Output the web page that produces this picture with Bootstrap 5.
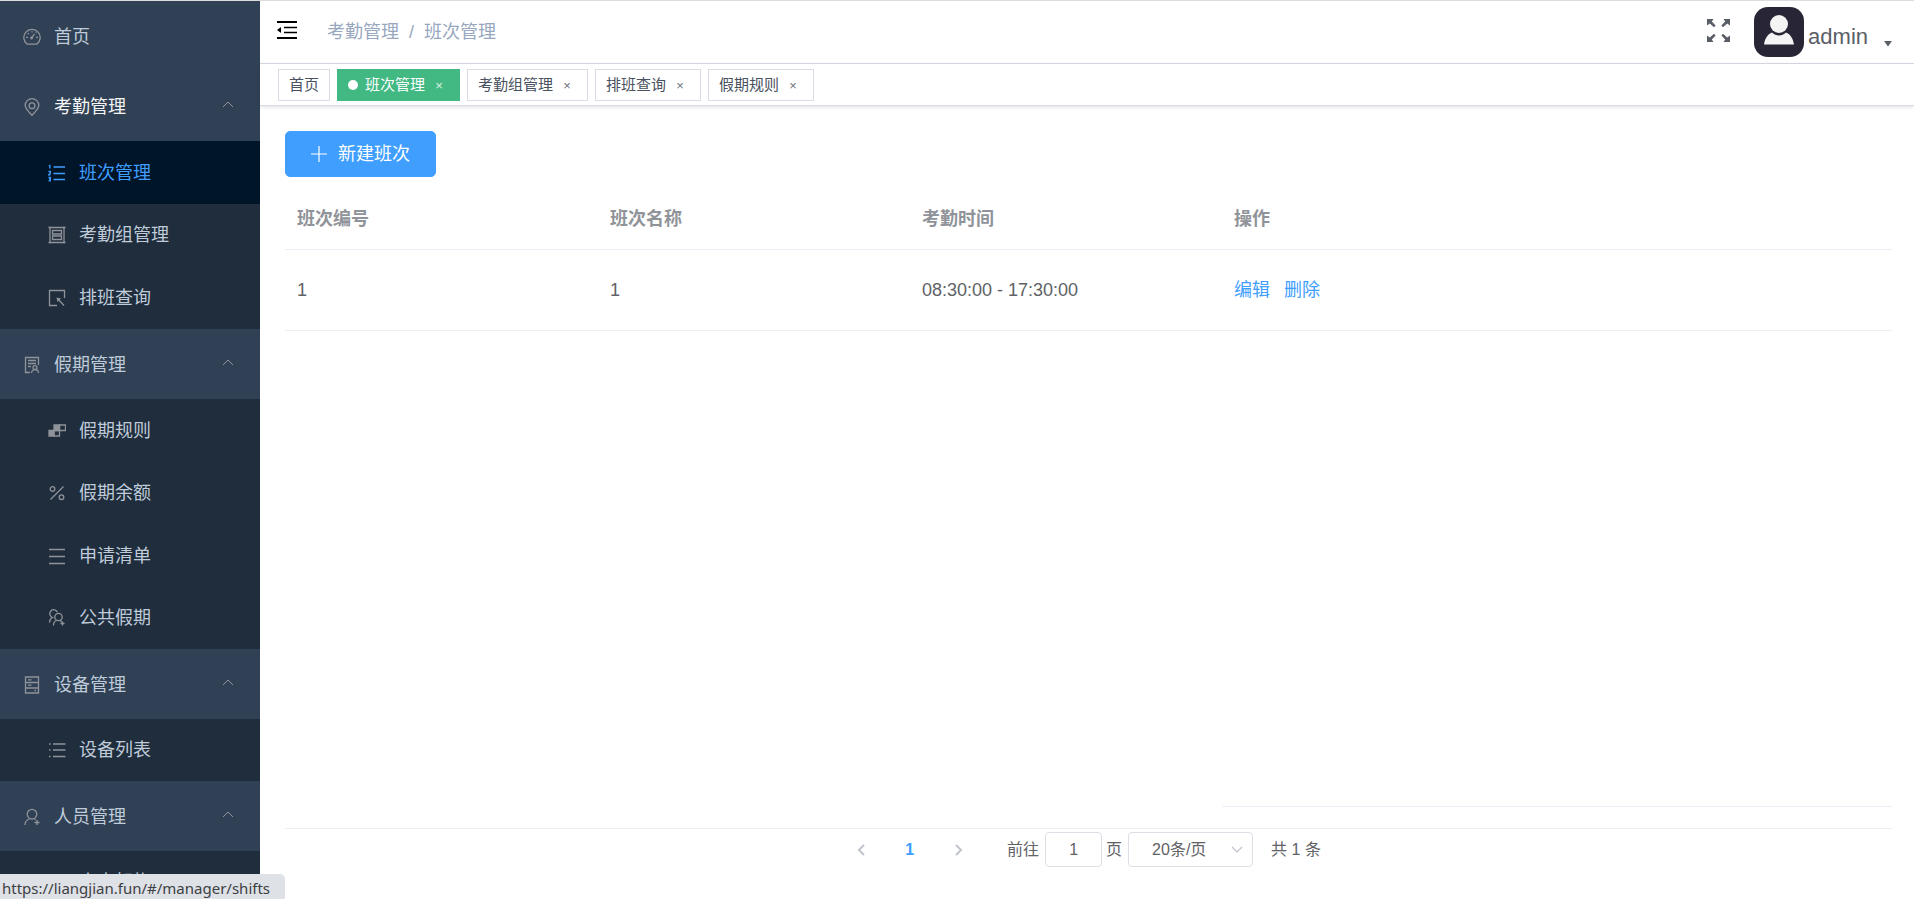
<!DOCTYPE html>
<html lang="zh-CN">
<head>
<meta charset="utf-8">
<meta name="viewport" content="width=device-width, initial-scale=1">
<title>班次管理</title>
<link href="https://cdn.jsdelivr.net/npm/bootstrap@5.3.0/dist/css/bootstrap.min.css" rel="stylesheet">
<style>
body{font-family:"Liberation Sans","Noto Sans CJK SC",sans-serif;font-size:18px;line-height:24px;color:#606266;background:#fff}
.shell{height:100vh;border-top:1px solid #dcdcdf;overflow:hidden}
a{text-decoration:none}
svg{display:block;flex:none}
.ico{width:18px;height:18px;fill:none;stroke:currentColor;stroke-width:1.3}
/* sidebar */
.side{width:260px;flex:none;background:#304156;overflow:hidden}
.side ul{list-style:none;margin:0;padding:0}
.side a{color:#bfcbd9}
.side .ico{color:#909399}
.side .top-item{height:70px;padding:2px 26px 0 23px;gap:13px}
.side .top-item.open-now{color:#f4f4f5}
.side .arrow{width:12px;height:12px;margin-bottom:4px;stroke-width:1}
.sub{background:#1f2d3d}
.sub a{height:62px;padding-left:48px;gap:13px}
.sub li:nth-child(odd):not(:only-child) a{height:63px}
.sub a.current,.side .sub a.current .ico{color:#409eff}
.sub a.current{background:#001528}
/* header */
.topbar{height:63px;border-bottom:1px solid #d8dce5;padding:0 22px 0 17px;color:#5a5e66}
.plain{border:0;background:none;padding:0;color:inherit}
.crumbs{--bs-breadcrumb-divider-color:#97a8be;--bs-breadcrumb-item-padding-x:10px;margin:0 0 0 30px}
.crumbs a,.crumbs .active{color:#97a8be}
.avatar{width:50px;height:50px;border-radius:14px;background:#272536}
.user{font-size:22px;line-height:28px;padding-top:10px}
.tags{height:42px;border-bottom:1px solid #d8dce5;box-shadow:0 1px 4px rgba(0,0,0,.13);padding:0 18px;gap:7px}
.tagx{height:32px;border:1px solid #d8dce5;color:#495060;font-size:15px;padding:0 10px}
.tagx a{color:inherit}
.tagx.on{background:#42b983;border-color:#42b983;color:#fff}
.tagx.on::before{content:"";width:10px;height:10px;border-radius:50%;background:#fff;margin-right:7px}
.tagx button{width:20px;margin:2px 0 0 4px;line-height:20px;font-size:13px;opacity:.8}
/* content */
.work{padding:25px 22px 0 25px;min-height:0}
.btn-new{--bs-btn-bg:#409eff;--bs-btn-border-color:#409eff;--bs-btn-color:#fff;--bs-btn-hover-bg:#66b1ff;--bs-btn-hover-border-color:#66b1ff;--bs-btn-border-radius:5px;--bs-btn-font-size:18px;width:151px;height:46px;padding:0;gap:11px;line-height:24px}
.grid{table-layout:fixed;margin:10px 0 0;--bs-table-color:#606266;--bs-table-bg:transparent;border-color:#ebeef5}
.grid col.std{width:312px}
.grid col.num{width:313px}
.grid th,.grid td{padding:0 12px;vertical-align:middle;border-bottom:1px solid #ebeef5}
.grid th{height:62px;padding-top:3px;color:#909399}
.grid td{height:81px}
.grid td a{color:#409eff}
.grid td a+a{margin-left:14px}
.patch{width:670px;height:1px;background:#ebeef5;margin-bottom:21px}
.pager{border-top:1px solid #ebeef5;height:71px;font-size:16px;padding:3px 20px 0 0}
.pager .box{height:35px;border:1px solid #dcdfe6;border-radius:4px;color:#606266;font-size:16px;background-color:#fff}
.pager input.box{width:57px;text-align:center}
.pager select.box{width:125px;padding:0 0 0 23px;appearance:none}
.pick{margin:0 18px 0 6px}
.pick svg{position:absolute;right:10px;top:12px;pointer-events:none}
.goto-label{margin:0 6px 0 24px}
.pbtn{width:49px;height:35px;color:#c0c4cc}
.pbtn.cur{color:#409eff;font-weight:700}
.hint{position:fixed;left:0;bottom:0;width:285px;height:25px;background:#dee1e6;border-top-right-radius:5px;color:#3c4043;font:15px/28px "Noto Sans",sans-serif;padding-left:2px;white-space:nowrap}
</style>
</head>
<body>
<div class="shell d-flex">
<nav class="side" aria-label="主菜单">
<ul>
<li><a href="#" class="top-item d-flex align-items-center"><svg class="ico" viewBox="0 0 18 18"><path d="M4.2 16.200h9.600a8.200 8.200 0 1 0-9.600 0zM8.700 9.800l2.800-4M9 3.300v1.200M3 9.300h2M13 9.300h2M4.800 5.200l1 1M12.800 5l.6-.6"/><circle cx="8.600" cy="10" r=".8"/></svg><span>首页</span></a></li>
<li><a href="#" class="top-item open-now d-flex align-items-center"><svg class="ico" viewBox="0 0 18 18"><path d="M9 17.200C6 14 2.200 11 2.200 7.300a6.800 6.600 0 0 1 13.600 0C15.800 11 12 14 9 17.200z"/><circle cx="9" cy="7.800" r="2.900"/></svg><span>考勤管理</span><svg class="ico arrow ms-auto" viewBox="0 0 12 12"><path d="M1 8l5-5 5 5"/></svg></a>
<ul class="sub">
<li><a href="#" class="current d-flex align-items-center"><svg class="ico" viewBox="0 0 18 18"><path d="M5.500 3H17M5.500 9.500H17M5.500 15.500H17" stroke-width="1.600"/><path d="M.8 2l1-.5v3M.5 7.500h1.800v1.700L.6 10.800h1.900M.5 13.500h1.800v3.300H.5M1 15.200h1.300"/></svg><span>班次管理</span></a></li>
<li><a href="#" class="d-flex align-items-center"><svg class="ico" viewBox="0 0 18 18"><path d="M2 .5v17M16 .5v17M.5 1.500h17M.5 16.500h17M4.500 4.500h9v3.500h-9zM4.500 10h9v3.500h-9z"/></svg><span>考勤组管理</span></a></li>
<li><a href="#" class="d-flex align-items-center"><svg class="ico" viewBox="0 0 18 18"><path d="M9 16.500H1.500v-15h15V9M9.500 9.500l6.500 7"/><path d="M8.500 8.500l4.500 1-3.500 3.500z" fill="currentColor" stroke="none"/></svg><span>排班查询</span></a></li>
</ul></li>
<li><a href="#" class="top-item d-flex align-items-center"><svg class="ico" viewBox="0 0 18 18"><path d="M7 16.500H2.500V1.500h13V9M5 4.500h8M5 7.500h8M5 10.500h3M8.500 17c0-2 1.500-3.300 3.400-3.300S15.500 15 15.500 17"/><circle cx="12" cy="11.600" r="2"/></svg><span>假期管理</span><svg class="ico arrow ms-auto" viewBox="0 0 12 12"><path d="M1 8l5-5 5 5"/></svg></a>
<ul class="sub">
<li><a href="#" class="d-flex align-items-center"><svg class="ico" viewBox="0 0 18 18"><path d="M11.500 3h6v5.500h-6z"/><path d="M6 3h5.500v5.500H6zM1 8.500h5V14H1z" fill="currentColor"/><path d="M6 8.500h5.500V14H6z"/></svg><span>假期规则</span></a></li>
<li><a href="#" class="d-flex align-items-center"><svg class="ico" viewBox="0 0 18 18"><path d="M15.500 2.500l-13 13"/><circle cx="4.500" cy="5" r="2.300"/><circle cx="13.500" cy="13.200" r="2.300"/></svg><span>假期余额</span></a></li>
<li><a href="#" class="d-flex align-items-center"><svg class="ico" viewBox="0 0 18 18"><path d="M1 2.500h16M1 9.500h16M1 16.500h16"/></svg><span>申请清单</span></a></li>
<li><a href="#" class="d-flex align-items-center"><svg class="ico" viewBox="0 0 18 18"><path d="M9.500 3.200A4 4 0 1 0 4.500 8.500C2.500 9.500 1.500 11.500 1.500 13.500M5.500 16.500c0-3 1.500-4.500 3-5M12 11.500l2 1.500M14.500 12.500v4M12.500 14.500h4"/><circle cx="10.500" cy="8" r="3.700"/></svg><span>公共假期</span></a></li>
</ul></li>
<li><a href="#" class="top-item d-flex align-items-center"><svg class="ico" viewBox="0 0 18 18"><path d="M2.500 1h13v16h-13zM2.500 6.500h13M2.500 12h13M5 3.800h3.500M5 9.200h3.500M11.500 14.500h1.500"/></svg><span>设备管理</span><svg class="ico arrow ms-auto" viewBox="0 0 12 12"><path d="M1 8l5-5 5 5"/></svg></a>
<ul class="sub">
<li><a href="#" class="d-flex align-items-center"><svg class="ico" viewBox="0 0 18 18"><path d="M5 3h12.500M5 9h12.500M5 15.500h12.500M1 3h1.500M1 9h1.500M1 15.500h1.500" stroke-width="1.500"/></svg><span>设备列表</span></a></li>
</ul></li>
<li><a href="#" class="top-item d-flex align-items-center"><svg class="ico" viewBox="0 0 18 18"><path d="M2 17c0-3.500 1.500-5 4.500-6M11.500 11l1.200.7M14 12v5M11.500 14.500h5"/><circle cx="9" cy="6.200" r="4.800"/></svg><span>人员管理</span><svg class="ico arrow ms-auto" viewBox="0 0 12 12"><path d="M1 8l5-5 5 5"/></svg></a>
<ul class="sub">
<li><a href="#" class="d-flex align-items-center"><svg class="ico" viewBox="0 0 18 18"><path d="M2 17c0-3.500 1.500-5 4.500-6M11.500 11l4 6"/><circle cx="9" cy="7" r="4"/></svg><span>人事架构</span></a></li>
</ul></li>
</ul>
</nav>
<div class="flex-grow-1 d-flex flex-column" style="min-width:0">
<header class="topbar d-flex align-items-center flex-shrink-0">
<button class="plain mb-1" type="button" aria-label="收起菜单"><svg width="20" height="18" viewBox="0 0 20 18"><path d="M0 1h20M0 17h20" stroke="#000" stroke-width="2"/><path d="M7 6.500h13M7 11.500h13" stroke="#000" stroke-width="1.600"/><path d="M0 9l4-3v6z" fill="#000"/></svg></button>
<nav aria-label="breadcrumb"><ol class="breadcrumb crumbs"><li class="breadcrumb-item"><a href="#">考勤管理</a></li><li class="breadcrumb-item active" aria-current="page">班次管理</li></ol></nav>
<button class="plain ms-auto me-4 mb-1" type="button" aria-label="全屏"><svg width="23" height="23" viewBox="0 0 23 23"><g fill="#5a5e66"><path d="M0 0h6.500L4.800 2.500 8.600 6.600 7 8.200 2.800 4.500 0 6.500z"/><path d="M23 0h-6.500l1.700 2.500-3.800 4.100L16 8.200l4.200-3.700 2.800 2z"/><path d="M0 23h6.500l-1.700-2.500 3.800-4.100L7 14.800l-4.200 3.700-2.800-2z"/><path d="M23 23h-6.500l1.700-2.500-3.800-4.100 1.600-1.600 4.200 3.700 2.800-2z"/></g></svg></button>
<button class="plain d-flex align-items-center" type="button"><svg class="avatar" viewBox="0 0 50 50"><path d="M10 37.500C11 31 14 27 18 25.500c4 4 10 4 14 0 4 1.500 7 5.500 8 12z" fill="#f4f4f4"/><circle cx="25" cy="17" r="9" fill="#f4f4f4"/></svg><span class="user ms-1">admin</span><svg class="ms-3 mt-4" width="8" height="6" viewBox="0 0 8 6"><path d="M0 0h8L4 5.500z" fill="#5a5e66"/></svg></button>
</header>
<div class="tags d-flex align-items-center flex-shrink-0">
<div class="tagx d-flex align-items-center"><a href="#">首页</a></div>
<div class="tagx on d-flex align-items-center"><a href="#">班次管理</a><button class="plain" type="button" aria-label="关闭">×</button></div>
<div class="tagx d-flex align-items-center"><a href="#">考勤组管理</a><button class="plain" type="button" aria-label="关闭">×</button></div>
<div class="tagx d-flex align-items-center"><a href="#">排班查询</a><button class="plain" type="button" aria-label="关闭">×</button></div>
<div class="tagx d-flex align-items-center"><a href="#">假期规则</a><button class="plain" type="button" aria-label="关闭">×</button></div>
</div>
<main class="work flex-grow-1 d-flex flex-column">
<button class="btn btn-new d-flex align-items-center justify-content-center flex-shrink-0" type="button"><svg width="16" height="16" viewBox="0 0 16 16"><path d="M8 0v16M0 8h16" stroke="#fff" stroke-width="1.200"/></svg>新建班次</button>
<table class="table grid">
<colgroup><col class="num"><col class="std"><col class="std"><col></colgroup>
<thead><tr><th scope="col">班次编号</th><th scope="col">班次名称</th><th scope="col">考勤时间</th><th scope="col">操作</th></tr></thead>
<tbody><tr><td>1</td><td>1</td><td>08:30:00 - 17:30:00</td><td><a href="#">编辑</a><a href="#">删除</a></td></tr></tbody>
</table>
<div class="patch mt-auto ms-auto flex-shrink-0"></div>
<div class="pager d-flex justify-content-center align-items-start flex-shrink-0">
<div class="d-flex align-items-center">
<button class="plain pbtn d-flex align-items-center justify-content-center" type="button" aria-label="上一页"><svg width="8" height="12" viewBox="0 0 8 12"><path d="M7 1L2 6l5 5" fill="none" stroke="currentColor" stroke-width="2"/></svg></button>
<button class="plain pbtn cur" type="button">1</button>
<button class="plain pbtn d-flex align-items-center justify-content-center" type="button" aria-label="下一页"><svg width="8" height="12" viewBox="0 0 8 12"><path d="M1 1l5 5-5 5" fill="none" stroke="currentColor" stroke-width="2"/></svg></button>
<label for="goto" class="goto-label">前往</label><input id="goto" class="box me-1" type="text" value="1"><label for="goto">页</label>
<div class="pick position-relative"><select class="box" aria-label="每页条数"><option>20条/页</option></select><svg width="12" height="12" viewBox="0 0 12 12"><path d="M1 3l5 5 5-5" fill="none" stroke="#c0c4cc" stroke-width="1.200"/></svg></div>
<span>共 1 条</span>
</div>
</div>
</main>
</div>
</div>
<div class="hint">https://liangjian.fun/#/manager/shifts</div>
<script src="https://cdn.jsdelivr.net/npm/bootstrap@5.3.0/dist/js/bootstrap.bundle.min.js"></script>
</body>
</html>
